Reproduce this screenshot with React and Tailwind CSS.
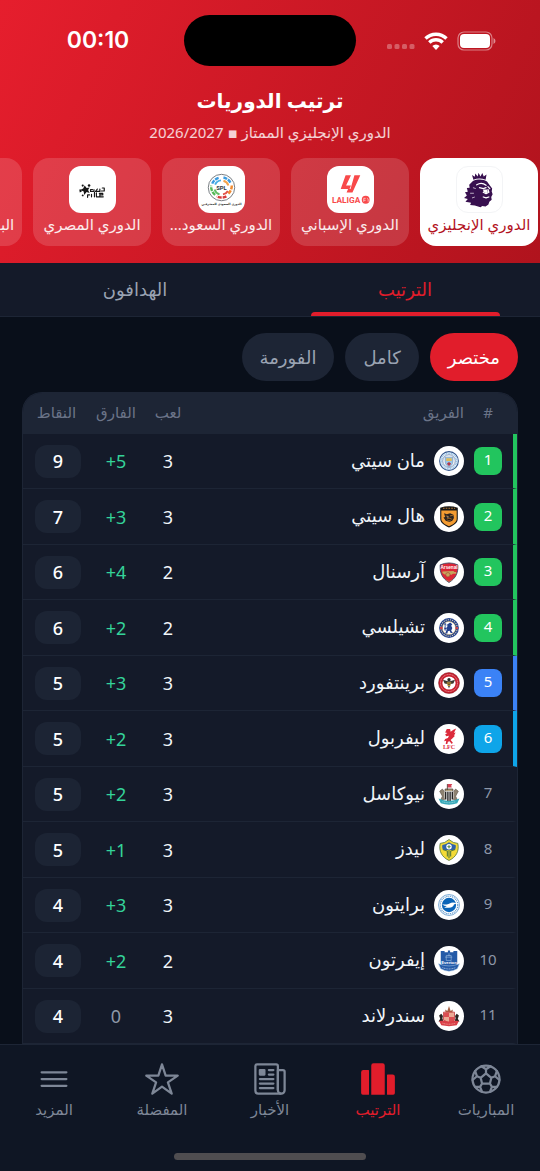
import React, { useState } from 'react';
import {
  IoFootballOutline,
  IoPodium,
  IoNewspaperOutline,
  IoStarOutline,
  IoMenuOutline,
} from 'react-icons/io5';

const PremierLeagueLogo = () => (
  <svg viewBox="0 0 48 48" className="size-full">
    <g fill="#38104f">
      <path d="M16 8.500l3 2 .5-3.500 2.500 3 1-4 2 4 2-3.500 1.500 3.500 3-2-1 5.500c-4-1.500-9-1.500-13 0z" />
      <path d="M17 15c5-2.500 12-2 15 .5l2.500 3.500 3 4-.5 3 1 3-1.500 3 .5 3-2.500 2-1 3-3 2-3.500-.5-2 1.500-6-2-5-.5 1-2.500-6-1 2.500-3-4-1 3-2.500-2-3.500 3-.5-1-4 3-.5-.5-3z" />
    </g>
    <g fill="none" stroke="#fff" strokeWidth="1.300" strokeLinecap="round" strokeLinejoin="round">
      <path d="M21 19c3-2 7-2 10 .5M24 22l4 1 3-1M33 21l2 2" />
      <path d="M28 27l3 1.500 3-1.500M33 24l1 3M28 32l3 1 3-1" />
    </g>
    <path d="M28 24l4 0 1 3-2 1-3-2z" fill="#fff" />
    <path d="M17 22l3 1M14 28l4 0M16 33l3-1" stroke="#fff" strokeWidth=".7" />
  </svg>
);

const LaLigaLogo = () => (
  <svg viewBox="0 0 48 48" className="size-full">
    <g fill="#f8494a">
      <path d="M19 9.500h5.500L19.500 20h5l-1.500 3.500h-9z" />
      <path d="M28 9.500h6L26 27h-6l1.500-3.500h2.500z" />
      <text x="5" y="37.500" fontSize="8.500" fontWeight="700" textAnchor="start" direction="ltr" textRendering="geometricPrecision" className="font-['Liberation_Sans_Narrow',Roboto,sans-serif]">LALIGA</text>
      <circle cx="39.500" cy="34.500" r="4" />
    </g>
    <path d="M37.500 33v3.500M37.500 33h2M37.500 35h2M41 33l1 1v2.500" stroke="#fff" strokeWidth=".6" fill="none" />
  </svg>
);

const SaudiLogo = () => (
  <svg viewBox="0 0 48 48" className="size-full">
    <circle cx="24" cy="22" r="13.500" fill="none" stroke="#555b62" strokeWidth=".8" />
    <g fill="none" strokeWidth="2.500">
      <path d="M14.500 18a10.500 10.500 0 0 1 7-6" stroke="#3b9be0" strokeDasharray="4 1" />
      <path d="M26 11.700a10.500 10.500 0 0 1 7.500 6" stroke="#3b9be0" strokeDasharray="4 1" />
      <path d="M34.500 20a10.500 10.500 0 0 1-4 8.500" stroke="#f08b32" strokeDasharray="4 1" />
      <path d="M29 31a10.500 10.500 0 0 1-10 0" stroke="#d93a3a" strokeDasharray="4 1" />
      <path d="M17.500 29.500a10.500 10.500 0 0 1-4-9.500" stroke="#55b957" strokeDasharray="4 1" />
    </g>
    <g fill="none" strokeWidth="2">
      <path d="M17.500 19a7.200 7.200 0 0 1 6-4.300" stroke="#45aee5" />
      <path d="M26 15a7.200 7.200 0 0 1 5 5" stroke="#f3a34b" />
      <path d="M30.500 25.500a7.200 7.200 0 0 1-5 3.500" stroke="#e35248" />
      <path d="M22 29a7.200 7.200 0 0 1-5-5" stroke="#64be66" />
    </g>
    <text x="24" y="24" fontSize="6" fontWeight="700" textAnchor="middle" fill="#2c3640" direction="ltr" className="font-[Roboto,sans-serif]">SPL</text>
    <text x="24" y="39.500" fontSize="3" fontWeight="700" textAnchor="middle" fill="#111" direction="rtl" className="font-['DejaVu_Sans',sans-serif]">الدوري السعودي للمحترفين</text>
  </svg>
);

const EgyptLogo = () => (
  <svg viewBox="0 0 48 48" className="size-full">
    <g fill="#161616">
      <path d="M16 20l2 2.500 3-.5-1.500 2.500 1.500 3-3-1-2.500 3-.5-3.500-3.500-1.500 3-1.500z" />
      <path d="M10.500 24l2 0 .5 2-2 1z" />
      <circle cx="14" cy="20" r="1.100" />
      <circle cx="20.500" cy="20" r="1.300" />
      <circle cx="14" cy="30" r="1" />
      <circle cx="28" cy="28" r=".6" />
      <circle cx="31" cy="28" r=".6" />
    </g>
    <g fill="none" stroke="#161616" strokeWidth="1.200" strokeLinecap="round" strokeLinejoin="round">
      <path d="M36 22.500v3h-3M34 22.500h2M31.500 23.500v2.500H27M27.500 25.500l1.500-2M25.500 24v2H22l0-2h2" />
      <path d="M19 32v-2.500h2M23 29v2.500M26 27v4.500M28 31.500v-4M31 31.500h-3M31.500 29.500h3v-1.500h-3v3.500H35" />
    </g>
  </svg>
);

const leagues = [
  { name: 'الدوري الإنجليزي', logo: PremierLeagueLogo },
  { name: 'الدوري الإسباني', logo: LaLigaLogo },
  { name: 'الدوري السعود...', logo: SaudiLogo },
  { name: 'الدوري المصري', logo: EgyptLogo },
  { name: 'البطولة الإفريقية', logo: null },
];

const crests = {
  city: (
    <>
      <circle cx="20" cy="20" r="17" fill="#fff" stroke="#33558b" strokeWidth="2" />
      <circle cx="20" cy="20" r="14" fill="none" stroke="#98c5e9" strokeWidth="3" strokeDasharray="2 1" />
      <circle cx="20" cy="20" r="11.500" fill="#f3f6f9" stroke="#33558b" />
      <path d="M13 13h14v8c0 5-3 8-7 10-4-2-7-5-7-10z" fill="#98c5e9" stroke="#6b8bb0" />
      <path d="M15 15h10v5H15z" fill="#e0bd59" />
      <path d="M20 22l4 3-4 4-4-4z" fill="#b5394b" />
    </>
  ),
  hull: (
    <>
      <path d="M4 3q16-5 32 0v20c0 7-7 12-16 16C11 35 4 30 4 23z" fill="#161616" />
      <path d="M6 8h28v15c0 6-6 10-14 14C12 33 6 29 6 23z" fill="#f39b31" />
      <path d="M9 4h22" stroke="#b77a37" strokeWidth="2" strokeDasharray="3 2" />
      <path d="M11 13l5 2 6-2 6 3 1 6-3 5-5 2-7-2-4-6 3-1z" fill="#2b2320" />
      <path d="M14 18l5 1M22 18l5-1M16 24l4-2 5 2M17 27h6" stroke="#b9782b" strokeWidth="1.500" />
      <circle cx="18" cy="20" r="1" fill="#fff" />
    </>
  ),
  arsenal: (
    <>
      <path d="M4 7q16-7 32 0c1 14-3 24-16 32C7 31 3 21 4 7z" fill="#dc2637" stroke="#33415f" strokeWidth="1.500" />
      <text x="20" y="15" fontSize="8.500" fontWeight="700" textAnchor="middle" fill="#fff" className="font-['Liberation_Sans',sans-serif]">Arsenal</text>
      <path d="M8 19l20-1 2 2 3 0v3h-6l-2 2H13l-5-3z" fill="#c6a45d" />
      <circle cx="18" cy="25" r="4" fill="#c6a45d" stroke="#a53237" />
      <path d="M15 35l5 2 5-2" stroke="#c6a45d" fill="none" />
    </>
  ),
  chelsea: (
    <>
      <circle cx="20" cy="20" r="18" fill="#24418d" />
      <circle cx="20" cy="20" r="15" fill="none" stroke="#d8d2b2" strokeWidth="2" strokeDasharray="2 2" />
      <circle cx="20" cy="20" r="12" fill="#fff" stroke="#d3ad58" />
      <circle cx="6" cy="20" r="2.500" fill="#c93e4b" />
      <circle cx="34" cy="20" r="2.500" fill="#c93e4b" />
      <path d="M22 10l4 3-2 3 2 4-2 5 3 4h-4l-2-4-3 1-1 4h-4l2-5 1-4-4 2-1-4 4 1 3-4-3-1z" fill="#24418d" />
      <path d="M13 11v14M11 13h4" stroke="#24418d" strokeWidth="1.500" />
    </>
  ),
  brentford: (
    <>
      <circle cx="20" cy="20" r="19" fill="#c91f2e" stroke="#812029" />
      <circle cx="20" cy="20" r="15.500" fill="none" stroke="#e9a0a5" strokeWidth="1.500" strokeDasharray="2 1" />
      <circle cx="20" cy="20" r="12" fill="#fff" />
      <path d="M9 14l9 3h4l9-3-3 7-5 1-3 8-3-8-5-1z" fill="#3c3831" />
      <circle cx="20" cy="14" r="3" fill="#2b2926" />
      <path d="M16 20h8M17 24h6" stroke="#eeb432" strokeWidth="2" />
    </>
  ),
  liverpool: (
    <>
      <path d="M16 2l6 0 1 5 5-4 5-2-4 8 3-1-3 6 2 0-5 5-3 3 4 5-2 2-4-5-3 1-1 4h-3l1-6-4 1 2-4 5-2 2-4-5 1-2-3 4-3-4-1z" fill="#dc2b3c" />
      <text x="20" y="39" fontSize="11" fontWeight="700" textAnchor="middle" fill="#dc2b3c" className="font-['Liberation_Serif',serif]">LFC</text>
    </>
  ),
  newcastle: (
    <>
      <path d="M17 2h9l-2 3 1 3h-8z" fill="#d34355" />
      <path d="M17 2v11M13 11h14v5H13z" stroke="#4b4238" strokeWidth="1.500" fill="#b6a783" />
      <path d="M3 15l5-4 4 5v14H5l3-6zM37 15l-5-4-4 5v14h7l-3-6z" fill="#8d8271" stroke="#54493e" />
      <path d="M12 15h16v12c0 4-5 7-8 9-3-2-8-5-8-9z" fill="#fff" />
      <path d="M14 16v14M18 16v18M22 16v18M26 16v14" stroke="#222" strokeWidth="2.500" />
      <path d="M1 28q19 9 38 0l-4 9q-15 5-30 0z" fill="#36a8b8" />
      <path d="M8 34q12 4 24 0" fill="none" stroke="#d4edf0" strokeDasharray="2 1" />
    </>
  ),
  leeds: (
    <>
      <path d="M4 8q8 0 16-7 8 7 16 7c3 14-3 25-16 31C7 33 1 22 4 8z" fill="#f4db36" stroke="#557a3d" strokeWidth="1.500" />
      <path d="M8 11q7-1 12-5 5 4 12 5c1 3 0 6-1 9H9c-1-3-2-6-1-9z" fill="#3063aa" />
      <circle cx="20" cy="14" r="5" fill="#fff" />
      <path d="M20 10l1.500 3 3 1-3 1-1.500 3-1.500-3-3-1 3-1z" fill="#63914b" />
      <path d="M9 19l8 3v10M31 19l-8 3v10M20 20v15" stroke="#557a3d" strokeWidth="2" fill="none" />
    </>
  ),
  brighton: (
    <>
      <circle cx="20" cy="20" r="19" fill="#fff" stroke="#1266b5" />
      <circle cx="20" cy="20" r="16" fill="none" stroke="#5792c7" strokeWidth="2" strokeDasharray="2 1.500" />
      <circle cx="20" cy="20" r="13" fill="#0964b8" />
      <path d="M7 18q6 2 12 0l5-2q5-1 10 1l-5 2q-1 5-9 6l-9 0 5-3q-5 0-9-4z" fill="#fff" />
    </>
  ),
  everton: (
    <>
      <path d="M5 2h7v2h6V1h4v3h6V2h7v20c0 7-6 12-15 15C11 34 5 29 5 22z" fill="#245ba8" />
      <path d="M15 10h9v9h-9zM13 13h13M20 6v5" stroke="#a9c8e7" fill="none" />
      <path d="M1 25q19 8 38 0l-4 9q-15 9-30 0z" fill="#245ba8" stroke="#a9c8e7" />
      <text x="20" y="26" fontSize="7.500" fontWeight="700" textAnchor="middle" fill="#fff" className="font-['Liberation_Sans',sans-serif]">Everton</text>
      <path d="M8 32q12 5 24 0" stroke="#fff" strokeDasharray="2 1" fill="none" />
    </>
  ),
  sunderland: (
    <>
      <path d="M13 8l4 3 3-9 3 9 4-3-1 7H14z" fill="#a86144" />
      <path d="M10 13h20v14l-10 6-10-6z" fill="#ecaa94" stroke="#c33e43" strokeWidth="1.500" />
      <path d="M11 14h9v8h-9zM20 22h9v6l-9 4z" fill="#db4e51" />
      <path d="M2 19l4-3 3 4-1 4 2 6H1l3-5zM38 19l-4-3-3 4 1 4-2 6h9l-3-5z" fill="#292521" />
      <path d="M2 29l9-1q9 4 18 0l9 1-4 8q-14 3-28 0z" fill="#d93e47" />
      <path d="M8 33q12 4 24 0" stroke="#f6d2bd" strokeDasharray="2 1" fill="none" />
    </>
  ),
};

const teams = [
  { name: 'مان سيتي', crest: 'city', played: 3, diff: '+5', points: 9, zone: 'green' },
  { name: 'هال سيتي', crest: 'hull', played: 3, diff: '+3', points: 7, zone: 'green' },
  { name: 'آرسنال', crest: 'arsenal', played: 2, diff: '+4', points: 6, zone: 'green' },
  { name: 'تشيلسي', crest: 'chelsea', played: 2, diff: '+2', points: 6, zone: 'green' },
  { name: 'برينتفورد', crest: 'brentford', played: 3, diff: '+3', points: 5, zone: 'blue' },
  { name: 'ليفربول', crest: 'liverpool', played: 3, diff: '+2', points: 5, zone: 'sky' },
  { name: 'نيوكاسل', crest: 'newcastle', played: 3, diff: '+2', points: 5 },
  { name: 'ليدز', crest: 'leeds', played: 3, diff: '+1', points: 5 },
  { name: 'برايتون', crest: 'brighton', played: 3, diff: '+3', points: 4 },
  { name: 'إيفرتون', crest: 'everton', played: 2, diff: '+2', points: 4 },
  { name: 'سندرلاند', crest: 'sunderland', played: 3, diff: '0', points: 4 },
];

const zoneBorder = {
  green: 'border-r-[#22c55e]',
  blue: 'border-r-[#3b82f6]',
  sky: 'border-r-[#0ea5e9]',
};

const zoneBadge = {
  green: 'bg-[#22c55e] text-white',
  blue: 'bg-[#3b82f6] text-white',
  sky: 'bg-[#0ea5e9] text-white',
};

const navItems = [
  { label: 'المباريات', icon: IoFootballOutline },
  { label: 'الترتيب', icon: IoPodium },
  { label: 'الأخبار', icon: IoNewspaperOutline },
  { label: 'المفضلة', icon: IoStarOutline },
  { label: 'المزيد', icon: IoMenuOutline },
];

const StatusBar = () => (
  <div dir="ltr" className="grid h-[66px] grid-cols-[1fr_172px_1fr] pt-[15px] text-white">
    <div className="flex items-center justify-center pl-3 font-[Inter,sans-serif] text-[23px] font-semibold">
      00:10
    </div>
    <div className="rounded-full bg-black" />
    <div className="flex items-center justify-end gap-[9px] pr-11">
      <svg width="28" height="20" viewBox="0 0 28 20" fill="#fff" fillOpacity=".3">
        <rect x="0" y="13" width="5" height="5" rx="1.500" />
        <rect x="7.500" y="13" width="5" height="5" rx="1.500" />
        <rect x="15" y="13" width="5" height="5" rx="1.500" />
        <rect x="22.500" y="13" width="5" height="5" rx="1.500" />
      </svg>
      <svg width="24" height="18" viewBox="0 0 24 18" fill="none" stroke="#fff" strokeWidth="3.400">
        <path d="M1.500 6.500a15 15 0 0 1 21 0" />
        <path d="M5.300 10.500a9.500 9.500 0 0 1 13.400 0" />
        <path d="M12 18l-3.700-3.900a5.300 5.300 0 0 1 7.400 0z" fill="#fff" stroke="none" />
      </svg>
      <svg width="39" height="20" viewBox="0 0 39 20">
        <rect x="1" y="1" width="34" height="18" rx="6" fill="none" stroke="#fff" strokeOpacity=".45" strokeWidth="1.200" />
        <rect x="3" y="3" width="30" height="14" rx="4" fill="#fff" />
        <path d="M36.500 7q2 1 2 3t-2 3z" fill="#fff" fillOpacity=".5" />
      </svg>
    </div>
  </div>
);

const LeagueCard = ({ league, active, onClick }) => {
  const Logo = league.logo;
  return (
    <button
      onClick={onClick}
      className={`flex h-[88px] w-[118px] shrink-0 flex-col items-center rounded-2xl pt-2 ${
        active ? 'bg-white text-[#b3131f]' : 'bg-white/15 text-white/90'
      }`}
    >
      <span className={`size-[47px] overflow-hidden rounded-xl bg-white ${active ? 'border border-gray-100' : ''}`}>
        {Logo && <Logo />}
      </span>
      <span className="w-full overflow-hidden text-center text-[15px] leading-[22px] whitespace-nowrap">{league.name}</span>
    </button>
  );
};

const TeamRow = ({ team, rank }) => (
  <tr className="h-[55px] even:h-[56px]">
    <td
      className={`border-r-4 border-b border-b-[#1d2535] pr-[11px] ${
        team.zone ? zoneBorder[team.zone] : 'border-r-transparent'
      }`}
    >
      <span
        className={`flex size-7 justify-center rounded-lg text-[15px] leading-6 ${
          team.zone ? zoneBadge[team.zone] : 'text-[#8e97a8]'
        }`}
      >
        {rank}
      </span>
    </td>
    <td className="border-b border-[#1d2535]">
      <div className="flex items-center gap-[9px]">
        <span className="flex size-[30px] shrink-0 items-center justify-center rounded-full bg-white">
          <svg dir="ltr" viewBox="0 0 40 40" className="size-[22px]">{crests[team.crest]}</svg>
        </span>
        <span className="pb-[3px] text-lg leading-7 text-[#f1f5f9]">{team.name}</span>
      </div>
    </td>
    <td className="border-b border-[#1d2535] text-center text-lg leading-7 text-[#f1f5f9]">{team.played}</td>
    <td
      dir="ltr"
      className={`border-b border-[#1d2535] text-center text-lg leading-7 ${
        team.diff === '0' ? 'text-[#8e97a8]' : 'text-[#34d399]'
      }`}
    >
      {team.diff}
    </td>
    <td className="border-b border-[#1d2535] pr-[9px] pl-3">
      <span className="flex h-[33px] items-center justify-center rounded-xl bg-[#1c2434] text-lg font-medium text-white">
        {team.points}
      </span>
    </td>
  </tr>
);

export default function App() {
  const [league, setLeague] = useState(0);
  const [tab, setTab] = useState('الترتيب');
  const [mode, setMode] = useState('مختصر');

  return (
    <div
      dir="rtl"
      className="flex min-h-screen flex-col overflow-x-hidden bg-[#090f1a] font-['Noto_Sans','DejaVu_Sans',sans-serif]"
    >
      <header className="bg-linear-[116deg,#e61e2d,#b0131d] pb-[17px]">
        <StatusBar />
        <div className="pt-5 pb-2.5 text-center text-white">
          <h1 className="text-xl leading-[30px] font-bold">ترتيب الدوريات</h1>
          <p className="text-[15px] leading-8 text-white/80">الدوري الإنجليزي الممتاز ▪ 2026/2027</p>
        </div>
        <div className="flex gap-[11px] overflow-hidden pr-0.5">
          {leagues.map((item, i) => (
            <LeagueCard key={item.name} league={item} active={league === i} onClick={() => setLeague(i)} />
          ))}
        </div>
      </header>

      <div className="grid h-[54px] grid-cols-2 border-b border-[#1d2535] bg-[#141a29]">
        {['الترتيب', 'الهدافون'].map((label) => (
          <button
            key={label}
            onClick={() => setTab(label)}
            className={`flex flex-col items-center justify-between pt-3 text-lg leading-7 ${
              tab === label ? 'text-[#e11d2b]' : 'text-[#9aa3b2]'
            }`}
          >
            {label}
            <span className={`h-1 w-[70%] rounded-t ${tab === label ? 'bg-[#e11d2b]' : ''}`} />
          </button>
        ))}
      </div>

      <main className="flex-1 px-[22px] pt-4">
        <div className="flex gap-[11px] pb-[11px]">
          {['مختصر', 'كامل', 'الفورمة'].map((label) => (
            <button
              key={label}
              onClick={() => setMode(label)}
              className={`h-12 rounded-full px-[18px] text-lg leading-6 ${
                mode === label ? 'bg-[#e11d2b] text-white' : 'bg-[#1d2535] text-[#9aa3b2]'
              }`}
            >
              {label}
            </button>
          ))}
        </div>

        <div className="overflow-hidden rounded-t-[20px] border border-b-0 border-[#1d2535] bg-[#141a29]">
          <table className="w-full table-fixed border-separate border-spacing-0">
            <thead className="bg-[#1d2535] text-[15px] leading-5 text-[#6b7488]">
              <tr className="h-[41px]">
                <th className="w-[53px] pr-[15px] pb-1 font-normal"><span className="block w-7">#</span></th>
                <th className="pb-1 text-right font-normal">الفريق</th>
                <th className="w-[52px] pb-1 font-normal">لعب</th>
                <th className="w-[52px] pb-1 font-normal">الفارق</th>
                <th className="w-[67px] pb-1 font-normal">النقاط</th>
              </tr>
            </thead>
            <tbody>
              {teams.map((team, i) => (
                <TeamRow key={team.name} team={team} rank={i + 1} />
              ))}
            </tbody>
          </table>
        </div>
      </main>

      <nav className="border-t border-[#1d2535] bg-[#0f1624] pt-4 pb-[11px]">
        <div className="grid grid-cols-5">
          {navItems.map(({ label, icon: Icon }) => (
            <a
              key={label}
              href="#"
              className={`flex flex-col items-center text-[15px] leading-6 ${
                label === 'الترتيب' ? 'text-[#e11d2b]' : 'text-[#7e8797]'
              }`}
            >
              <Icon size={36} />
              {label}
            </a>
          ))}
        </div>
        <div className="mx-auto mt-8 h-[7px] w-48 rounded-full bg-[#4f4d50]" />
      </nav>
    </div>
  );
}
